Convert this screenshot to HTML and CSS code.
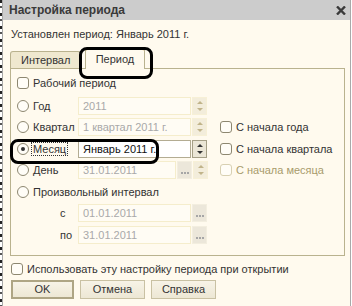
FILE: index.html
```html
<!DOCTYPE html>
<html lang="ru">
<head>
<meta charset="utf-8">
<link rel="stylesheet" href="styles.css">
</head>
<body>
<div class="screen">
  <div class="edge"></div>
  <div class="window">
    <div class="titlebar">
      <span class="title">Настройка периода</span>
      <svg class="close" width="10" height="9" viewBox="0 0 10 9"><path d="M1 0.5 L9 8.5 M9 0.5 L1 8.5" stroke="#3a3a3a" stroke-width="2.4"/></svg>
    </div>
    <div class="body">
      <div class="info">Установлен период: Январь 2011 г.</div>
      <div class="tabs">
        <div class="tab">Интервал</div>
        <div class="tab active">Период</div>
        <div class="hl hl-tab"></div>
      </div>
      <div class="panel">
        <div class="hl hl-month"></div>
        <div class="row first">
          <span class="cb"></span><span class="lbl">Рабочий период</span>
        </div>
        <div class="grid">
          <div class="opt"><span class="rb"></span><span class="lbl">Год</span></div>
          <div class="ctl"><div class="inp dis wide">2011</div><div class="spin dis"><i class="up"></i><i class="dn"></i></div></div>
          <div class="chk"></div>

          <div class="opt"><span class="rb"></span><span class="lbl">Квартал</span></div>
          <div class="ctl"><div class="inp dis wide">1 квартал 2011 г.</div><div class="spin dis"><i class="up"></i><i class="dn"></i></div></div>
          <div class="chk"><span class="cb"></span><span class="lbl">С начала года</span></div>

          <div class="opt"><span class="rb on"></span><span class="lbl focus">Месяц</span></div>
          <div class="ctl"><div class="inp act wide">Январь 2011 г.</div><div class="spin act"><i class="up"></i><i class="dn"></i></div></div>
          <div class="chk"><span class="cb"></span><span class="lbl">С начала квартала</span></div>

          <div class="opt"><span class="rb"></span><span class="lbl">День</span></div>
          <div class="ctl"><div class="inp dis narrow">31.01.2011</div><div class="dots"><i></i><i></i><i></i></div><div class="spin dis"><i class="up"></i><i class="dn"></i></div></div>
          <div class="chk dim"><span class="cb"></span><span class="lbl">С начала месяца</span></div>

          <div class="opt span"><span class="rb"></span><span class="lbl">Произвольный интервал</span></div>

          <div class="opt sub"><span class="lbl">с</span></div>
          <div class="ctl"><div class="inp dis wide">01.01.2011</div><div class="dots"><i></i><i></i><i></i></div></div>
          <div class="chk"></div>

          <div class="opt sub"><span class="lbl">по</span></div>
          <div class="ctl"><div class="inp dis wide">31.01.2011</div><div class="dots"><i></i><i></i><i></i></div></div>
          <div class="chk"></div>
        </div>
      </div>
      <div class="row use">
        <span class="cb"></span><span class="lbl">Использовать эту настройку периода при открытии</span>
      </div>
      <div class="buttons">
        <div class="btn default">OK</div>
        <div class="btn">Отмена</div>
        <div class="btn">Справка</div>
      </div>
    </div>
  </div>
</div>
</body>
</html>
```

FILE: styles.css
```css
* { box-sizing: border-box; }
html, body { margin: 0; padding: 0; }
body {
  width: 352px;
  height: 306px;
  overflow: hidden;
  font-family: "Liberation Sans", Arial, sans-serif;
  font-size: 11px;
  color: #333;
}
.screen { display: flex; width: 352px; height: 306px; }
.edge {
  width: 3px;
  flex: none;
  background:
    linear-gradient(to right, transparent 0 2px, #a8a8a8 2px 3px),
    repeating-linear-gradient(to bottom, #222 0 3px, #fff 3px 6px, #555 6px 8px, #fff 8px 13px);
}
.window {
  flex: 1;
  background: #fffaee;
  border-right: 1px solid #a9a9a9;
  margin-right: 1px;
  display: flex;
  flex-direction: column;
}
.titlebar {
  height: 20px;
  background: #cccccc;
  display: flex;
  align-items: center;
  justify-content: space-between;
  padding: 0 4px 0 6px;
}
.title { font-weight: bold; font-size: 12px; color: #3a3a3a; }
.close { display: block; }
.body { padding: 0 5px 0 7px; flex: 1; display: flex; flex-direction: column; }
.info { height: 14px; line-height: 14px; margin-top: 7px; padding-left: 1px; }
.tabs { position: relative; display: flex; align-items: flex-end; height: 20px; margin-top: 7px; }
.tab {
  height: 18px;
  line-height: 16px;
  padding: 0 9px 0 10px;
  border: 1px solid #b9b28e;
  border-bottom: none;
  border-radius: 3px 3px 0 0;
  background: #efe8cf;
  position: relative;
  top: 1px;
}
.tab:first-child { width: 71px; }
.tab.active {
  width: 60px;
  margin-left: 4px;
  height: 21px;
  background: #fffaee;
  border-top: 2px solid #f5c35c;
  z-index: 2;
  text-align: center;
  padding: 1px 0 0 0;
}
.hl {
  position: absolute;
  border: 3px solid #000;
  border-radius: 8px;
  z-index: 5;
  pointer-events: none;
}
.hl-tab { left: 69px; top: -1px; width: 74px; height: 32px; }
.panel {
  position: relative;
  height: 188px;
  border: 1px solid #b9b28e;
  background: #fffaee;
  padding: 7px 0 0 6px;
}
.hl-month { left: -1px; top: 70px; width: 149px; height: 25px; }
.row { display: flex; align-items: center; height: 14px; }
.cb {
  width: 12px;
  height: 12px;
  border: 1px solid #8d8770;
  border-radius: 3px;
  background: #fffdf7;
  flex: none;
}
.lbl { margin-left: 4px; white-space: nowrap; }
.grid {
  display: grid;
  grid-template-columns: 61px 142px auto;
  grid-auto-rows: 21.5px;
  margin-top: 5px;
  align-items: center;
}
.opt { display: flex; align-items: center; }
.opt.span { grid-column: 1 / 4; }
.opt.sub .lbl { margin-left: 43px; }
.rb {
  width: 12px;
  height: 12px;
  border: 1px solid #8d8770;
  border-radius: 50%;
  background: #fffdf7;
  flex: none;
  position: relative;
}
.rb.on::after {
  content: "";
  position: absolute;
  left: 3px;
  top: 3px;
  width: 4px;
  height: 4px;
  border-radius: 50%;
  background: #333;
}
.lbl.focus { outline: 1px dotted #333; margin-left: 3px; padding: 0 1px; }
.ctl { display: flex; height: 18px; gap: 1px; }
.inp {
  height: 18px;
  line-height: 16px;
  padding-left: 4px;
  white-space: nowrap;
  overflow: hidden;
}
.inp.wide { width: 113px; }
.inp.narrow { width: 98px; }
.inp.dis { border: 1px solid #f5edcc; background: #fffcf4; color: #a9a9a9; }
.inp.act { border: 1px solid #b3ac92; background: #fff; color: #111; }
.spin { width: 15px; height: 18px; position: relative; }
.spin.dis { background: #f3eddb; border: 1px solid #f7f0d6; }
.spin.act { background: #ebe6d6; border: 1px solid #a59f86; }
.spin i {
  position: absolute;
  left: 4px;
  width: 0;
  height: 0;
  border-left: 3px solid transparent;
  border-right: 3px solid transparent;
}
.spin .up { top: 3px; border-bottom: 3px solid #c1b48a; }
.spin .dn { bottom: 3px; border-top: 3px solid #c1b48a; }
.spin.act .up { border-bottom-color: #333; }
.spin.act .dn { border-top-color: #333; }
.dots {
  width: 15px;
  height: 18px;
  background: #ece7da;
  border: 1px solid #f3eedf;
  display: flex;
  justify-content: center;
  align-items: flex-end;
  gap: 1px;
  padding-bottom: 4px;
}
.dots i { width: 2px; height: 2px; background: #a6a6a6; }
.chk { display: flex; align-items: center; padding-left: 0; }
.chk.dim .cb { border-color: #d8d0b2; }
.chk.dim .lbl { color: #a89a6c; }
.row.use { margin-top: 6px; padding-left: 1px; }
.buttons { display: flex; gap: 6px; margin-top: 4px; padding-left: 1px; }
.btn {
  width: 65px;
  height: 19px;
  line-height: 17px;
  text-align: center;
  border: 1px solid #c9c1a3;
  background: linear-gradient(#f7f3e7, #ede7d4);
  color: #333;
}
.btn.default { width: 63px; border: 2px solid #aea584; line-height: 15px; }
```
